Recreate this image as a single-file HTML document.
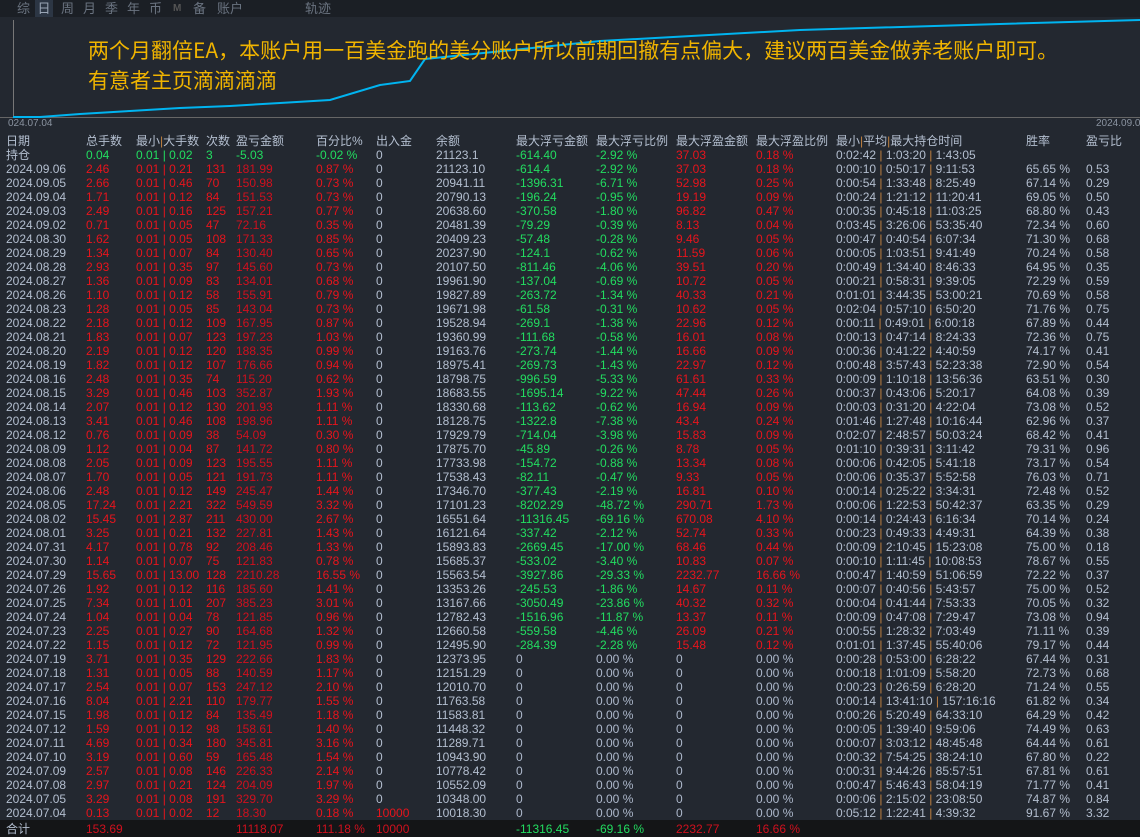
<!DOCTYPE html>
<html><head><meta charset="utf-8">
<style>
*{margin:0;padding:0;box-sizing:border-box}
body{width:1140px;height:837px;background:#232830;overflow:hidden;position:relative;font-family:"Liberation Sans","Noto Sans CJK SC",sans-serif;font-size:12px;color:#b4bfd0}
#tabs{position:absolute;left:0;top:0;width:1140px;height:17px;background:#1b1f25;font-size:13px;color:#6a7380}
#tabs span{position:absolute;top:0;line-height:17px}
.t{position:absolute;left:88px;color:#f0b400;font-size:21px;line-height:26px;font-family:"Noto Sans CJK SC",sans-serif;white-space:nowrap}
.r{position:absolute;left:0;width:1140px;height:14px;line-height:14px;white-space:nowrap}
.r span{position:absolute;top:0}
.a{left:6px}.b{left:86px}.c{left:136px}.d{left:206px}.e{left:236px}.f{left:316px}.g{left:376px}.h{left:436px}.i{left:516px}.j{left:596px}.k{left:676px}.l{left:756px}.m{left:836px}.n{left:1026px}.o{left:1086px}
.R .b,.R .c,.R .d,.R .f,.R .k,.R .l{color:#e8141c}
.R .e{color:#d0101e}
.R .i,.R .j{color:#22dd60}
.R .o,.R .n,.R .g,.R .h,.R .m{color:#b4bfd0}
.z .i,.z .j,.z .k,.z .l{color:#aeb9cc}
.G .b,.G .c,.G .d,.G .e,.G .f{color:#22dd60}
q{color:#c08040;quotes:none}
#foot{position:absolute;left:0;top:820px;width:1140px;height:17px;background:#141517}
#foot span{position:absolute;top:1px;line-height:16px}
</style></head><body>
<div id="tabs">
<span style="left:17px">综</span><span style="left:35px;width:18px;text-align:center;background:#2c3644;color:#9aa6b6">日</span><span style="left:61px">周</span><span style="left:83px">月</span><span style="left:105px">季</span><span style="left:127px">年</span><span style="left:149px">币</span><span style="left:173px;font-size:10px;font-weight:bold;color:#555">M</span><span style="left:193px">备</span><span style="left:217px">账户</span><span style="left:305px">轨迹</span>
</div>
<svg style="position:absolute;left:0;top:17px" width="1140" height="105">
<line x1="13.5" y1="3" x2="13.5" y2="100" stroke="#777" stroke-width="1"/>
<line x1="0" y1="100.5" x2="1140" y2="100.5" stroke="#666" stroke-width="1"/>
<polyline fill="none" stroke="#00b4f0" stroke-width="2" points="13,100 40,100 80,97 130,94 180,91 230,89 280,86 330,83 380,68 410,64 425,42 600,24 800,13 1000,7 1140,3"/>
</svg>
<div style="position:absolute;left:8px;top:118px;font-size:10px;color:#8a93a0">024.07.04</div>
<div style="position:absolute;left:1096px;top:118px;font-size:10px;color:#8a93a0">2024.09.06</div>
<div class="t" style="top:37px">两个月翻倍EA，本账户用一百美金跑的美分账户所以前期回撤有点偏大，建议两百美金做养老账户即可。</div>
<div class="t" style="top:67px">有意者主页滴滴滴滴</div>

<div class="r" style="top:134px"><span class="a">日期</span><span class="b">总手数</span><span class="c">最小<q>|</q>大手数</span><span class="d">次数</span><span class="e">盈亏金额</span><span class="f">百分比%</span><span class="g">出入金</span><span class="h">余额</span><span class="i">最大浮亏金额</span><span class="j">最大浮亏比例</span><span class="k">最大浮盈金额</span><span class="l">最大浮盈比例</span><span class="m">最小<q>|</q>平均<q>|</q>最大持仓时间</span><span class="n">胜率</span><span class="o">盈亏比</span></div>
<div class="r R G" style="top:148px"><span class="a">持仓</span><span class="b">0.04</span><span class="c">0.01 | 0.02</span><span class="d">3</span><span class="e">-5.03</span><span class="f">-0.02 %</span><span class="g">0</span><span class="h">21123.1</span><span class="i">-614.40</span><span class="j">-2.92 %</span><span class="k">37.03</span><span class="l">0.18 %</span><span class="m">0:02:42 <q>|</q> 1:03:20 <q>|</q> 1:43:05</span></div>
<div class="r R" style="top:162px"><span class="a">2024.09.06</span><span class="b">2.46</span><span class="c">0.01 | 0.21</span><span class="d">131</span><span class="e">181.99</span><span class="f">0.87 %</span><span class="g">0</span><span class="h">21123.10</span><span class="i">-614.4</span><span class="j">-2.92 %</span><span class="k">37.03</span><span class="l">0.18 %</span><span class="m">0:00:10 <q>|</q> 0:50:17 <q>|</q> 9:11:53</span><span class="n">65.65 %</span><span class="o">0.53</span></div>
<div class="r R" style="top:176px"><span class="a">2024.09.05</span><span class="b">2.66</span><span class="c">0.01 | 0.46</span><span class="d">70</span><span class="e">150.98</span><span class="f">0.73 %</span><span class="g">0</span><span class="h">20941.11</span><span class="i">-1396.31</span><span class="j">-6.71 %</span><span class="k">52.98</span><span class="l">0.25 %</span><span class="m">0:00:54 <q>|</q> 1:33:48 <q>|</q> 8:25:49</span><span class="n">67.14 %</span><span class="o">0.29</span></div>
<div class="r R" style="top:190px"><span class="a">2024.09.04</span><span class="b">1.71</span><span class="c">0.01 | 0.12</span><span class="d">84</span><span class="e">151.53</span><span class="f">0.73 %</span><span class="g">0</span><span class="h">20790.13</span><span class="i">-196.24</span><span class="j">-0.95 %</span><span class="k">19.19</span><span class="l">0.09 %</span><span class="m">0:00:24 <q>|</q> 1:21:12 <q>|</q> 11:20:41</span><span class="n">69.05 %</span><span class="o">0.50</span></div>
<div class="r R" style="top:204px"><span class="a">2024.09.03</span><span class="b">2.49</span><span class="c">0.01 | 0.16</span><span class="d">125</span><span class="e">157.21</span><span class="f">0.77 %</span><span class="g">0</span><span class="h">20638.60</span><span class="i">-370.58</span><span class="j">-1.80 %</span><span class="k">96.82</span><span class="l">0.47 %</span><span class="m">0:00:35 <q>|</q> 0:45:18 <q>|</q> 11:03:25</span><span class="n">68.80 %</span><span class="o">0.43</span></div>
<div class="r R" style="top:218px"><span class="a">2024.09.02</span><span class="b">0.71</span><span class="c">0.01 | 0.05</span><span class="d">47</span><span class="e">72.16</span><span class="f">0.35 %</span><span class="g">0</span><span class="h">20481.39</span><span class="i">-79.29</span><span class="j">-0.39 %</span><span class="k">8.13</span><span class="l">0.04 %</span><span class="m">0:03:45 <q>|</q> 3:26:06 <q>|</q> 53:35:40</span><span class="n">72.34 %</span><span class="o">0.60</span></div>
<div class="r R" style="top:232px"><span class="a">2024.08.30</span><span class="b">1.62</span><span class="c">0.01 | 0.05</span><span class="d">108</span><span class="e">171.33</span><span class="f">0.85 %</span><span class="g">0</span><span class="h">20409.23</span><span class="i">-57.48</span><span class="j">-0.28 %</span><span class="k">9.46</span><span class="l">0.05 %</span><span class="m">0:00:47 <q>|</q> 0:40:54 <q>|</q> 6:07:34</span><span class="n">71.30 %</span><span class="o">0.68</span></div>
<div class="r R" style="top:246px"><span class="a">2024.08.29</span><span class="b">1.34</span><span class="c">0.01 | 0.07</span><span class="d">84</span><span class="e">130.40</span><span class="f">0.65 %</span><span class="g">0</span><span class="h">20237.90</span><span class="i">-124.1</span><span class="j">-0.62 %</span><span class="k">11.59</span><span class="l">0.06 %</span><span class="m">0:00:05 <q>|</q> 1:03:51 <q>|</q> 9:41:49</span><span class="n">70.24 %</span><span class="o">0.58</span></div>
<div class="r R" style="top:260px"><span class="a">2024.08.28</span><span class="b">2.93</span><span class="c">0.01 | 0.35</span><span class="d">97</span><span class="e">145.60</span><span class="f">0.73 %</span><span class="g">0</span><span class="h">20107.50</span><span class="i">-811.46</span><span class="j">-4.06 %</span><span class="k">39.51</span><span class="l">0.20 %</span><span class="m">0:00:49 <q>|</q> 1:34:40 <q>|</q> 8:46:33</span><span class="n">64.95 %</span><span class="o">0.35</span></div>
<div class="r R" style="top:274px"><span class="a">2024.08.27</span><span class="b">1.36</span><span class="c">0.01 | 0.09</span><span class="d">83</span><span class="e">134.01</span><span class="f">0.68 %</span><span class="g">0</span><span class="h">19961.90</span><span class="i">-137.04</span><span class="j">-0.69 %</span><span class="k">10.72</span><span class="l">0.05 %</span><span class="m">0:00:21 <q>|</q> 0:58:31 <q>|</q> 9:39:05</span><span class="n">72.29 %</span><span class="o">0.59</span></div>
<div class="r R" style="top:288px"><span class="a">2024.08.26</span><span class="b">1.10</span><span class="c">0.01 | 0.12</span><span class="d">58</span><span class="e">155.91</span><span class="f">0.79 %</span><span class="g">0</span><span class="h">19827.89</span><span class="i">-263.72</span><span class="j">-1.34 %</span><span class="k">40.33</span><span class="l">0.21 %</span><span class="m">0:01:01 <q>|</q> 3:44:35 <q>|</q> 53:00:21</span><span class="n">70.69 %</span><span class="o">0.58</span></div>
<div class="r R" style="top:302px"><span class="a">2024.08.23</span><span class="b">1.28</span><span class="c">0.01 | 0.05</span><span class="d">85</span><span class="e">143.04</span><span class="f">0.73 %</span><span class="g">0</span><span class="h">19671.98</span><span class="i">-61.58</span><span class="j">-0.31 %</span><span class="k">10.62</span><span class="l">0.05 %</span><span class="m">0:02:04 <q>|</q> 0:57:10 <q>|</q> 6:50:20</span><span class="n">71.76 %</span><span class="o">0.75</span></div>
<div class="r R" style="top:316px"><span class="a">2024.08.22</span><span class="b">2.18</span><span class="c">0.01 | 0.12</span><span class="d">109</span><span class="e">167.95</span><span class="f">0.87 %</span><span class="g">0</span><span class="h">19528.94</span><span class="i">-269.1</span><span class="j">-1.38 %</span><span class="k">22.96</span><span class="l">0.12 %</span><span class="m">0:00:11 <q>|</q> 0:49:01 <q>|</q> 6:00:18</span><span class="n">67.89 %</span><span class="o">0.44</span></div>
<div class="r R" style="top:330px"><span class="a">2024.08.21</span><span class="b">1.83</span><span class="c">0.01 | 0.07</span><span class="d">123</span><span class="e">197.23</span><span class="f">1.03 %</span><span class="g">0</span><span class="h">19360.99</span><span class="i">-111.68</span><span class="j">-0.58 %</span><span class="k">16.01</span><span class="l">0.08 %</span><span class="m">0:00:13 <q>|</q> 0:47:14 <q>|</q> 8:24:33</span><span class="n">72.36 %</span><span class="o">0.75</span></div>
<div class="r R" style="top:344px"><span class="a">2024.08.20</span><span class="b">2.19</span><span class="c">0.01 | 0.12</span><span class="d">120</span><span class="e">188.35</span><span class="f">0.99 %</span><span class="g">0</span><span class="h">19163.76</span><span class="i">-273.74</span><span class="j">-1.44 %</span><span class="k">16.66</span><span class="l">0.09 %</span><span class="m">0:00:36 <q>|</q> 0:41:22 <q>|</q> 4:40:59</span><span class="n">74.17 %</span><span class="o">0.41</span></div>
<div class="r R" style="top:358px"><span class="a">2024.08.19</span><span class="b">1.82</span><span class="c">0.01 | 0.12</span><span class="d">107</span><span class="e">176.66</span><span class="f">0.94 %</span><span class="g">0</span><span class="h">18975.41</span><span class="i">-269.73</span><span class="j">-1.43 %</span><span class="k">22.97</span><span class="l">0.12 %</span><span class="m">0:00:48 <q>|</q> 3:57:43 <q>|</q> 52:23:38</span><span class="n">72.90 %</span><span class="o">0.54</span></div>
<div class="r R" style="top:372px"><span class="a">2024.08.16</span><span class="b">2.48</span><span class="c">0.01 | 0.35</span><span class="d">74</span><span class="e">115.20</span><span class="f">0.62 %</span><span class="g">0</span><span class="h">18798.75</span><span class="i">-996.59</span><span class="j">-5.33 %</span><span class="k">61.61</span><span class="l">0.33 %</span><span class="m">0:00:09 <q>|</q> 1:10:18 <q>|</q> 13:56:36</span><span class="n">63.51 %</span><span class="o">0.30</span></div>
<div class="r R" style="top:386px"><span class="a">2024.08.15</span><span class="b">3.29</span><span class="c">0.01 | 0.46</span><span class="d">103</span><span class="e">352.87</span><span class="f">1.93 %</span><span class="g">0</span><span class="h">18683.55</span><span class="i">-1695.14</span><span class="j">-9.22 %</span><span class="k">47.44</span><span class="l">0.26 %</span><span class="m">0:00:37 <q>|</q> 0:43:06 <q>|</q> 5:20:17</span><span class="n">64.08 %</span><span class="o">0.39</span></div>
<div class="r R" style="top:400px"><span class="a">2024.08.14</span><span class="b">2.07</span><span class="c">0.01 | 0.12</span><span class="d">130</span><span class="e">201.93</span><span class="f">1.11 %</span><span class="g">0</span><span class="h">18330.68</span><span class="i">-113.62</span><span class="j">-0.62 %</span><span class="k">16.94</span><span class="l">0.09 %</span><span class="m">0:00:03 <q>|</q> 0:31:20 <q>|</q> 4:22:04</span><span class="n">73.08 %</span><span class="o">0.52</span></div>
<div class="r R" style="top:414px"><span class="a">2024.08.13</span><span class="b">3.41</span><span class="c">0.01 | 0.46</span><span class="d">108</span><span class="e">198.96</span><span class="f">1.11 %</span><span class="g">0</span><span class="h">18128.75</span><span class="i">-1322.8</span><span class="j">-7.38 %</span><span class="k">43.4</span><span class="l">0.24 %</span><span class="m">0:01:46 <q>|</q> 1:27:48 <q>|</q> 10:16:44</span><span class="n">62.96 %</span><span class="o">0.37</span></div>
<div class="r R" style="top:428px"><span class="a">2024.08.12</span><span class="b">0.76</span><span class="c">0.01 | 0.09</span><span class="d">38</span><span class="e">54.09</span><span class="f">0.30 %</span><span class="g">0</span><span class="h">17929.79</span><span class="i">-714.04</span><span class="j">-3.98 %</span><span class="k">15.83</span><span class="l">0.09 %</span><span class="m">0:02:07 <q>|</q> 2:48:57 <q>|</q> 50:03:24</span><span class="n">68.42 %</span><span class="o">0.41</span></div>
<div class="r R" style="top:442px"><span class="a">2024.08.09</span><span class="b">1.12</span><span class="c">0.01 | 0.04</span><span class="d">87</span><span class="e">141.72</span><span class="f">0.80 %</span><span class="g">0</span><span class="h">17875.70</span><span class="i">-45.89</span><span class="j">-0.26 %</span><span class="k">8.78</span><span class="l">0.05 %</span><span class="m">0:01:10 <q>|</q> 0:39:31 <q>|</q> 3:11:42</span><span class="n">79.31 %</span><span class="o">0.96</span></div>
<div class="r R" style="top:456px"><span class="a">2024.08.08</span><span class="b">2.05</span><span class="c">0.01 | 0.09</span><span class="d">123</span><span class="e">195.55</span><span class="f">1.11 %</span><span class="g">0</span><span class="h">17733.98</span><span class="i">-154.72</span><span class="j">-0.88 %</span><span class="k">13.34</span><span class="l">0.08 %</span><span class="m">0:00:06 <q>|</q> 0:42:05 <q>|</q> 5:41:18</span><span class="n">73.17 %</span><span class="o">0.54</span></div>
<div class="r R" style="top:470px"><span class="a">2024.08.07</span><span class="b">1.70</span><span class="c">0.01 | 0.05</span><span class="d">121</span><span class="e">191.73</span><span class="f">1.11 %</span><span class="g">0</span><span class="h">17538.43</span><span class="i">-82.11</span><span class="j">-0.47 %</span><span class="k">9.33</span><span class="l">0.05 %</span><span class="m">0:00:06 <q>|</q> 0:35:37 <q>|</q> 5:52:58</span><span class="n">76.03 %</span><span class="o">0.71</span></div>
<div class="r R" style="top:484px"><span class="a">2024.08.06</span><span class="b">2.48</span><span class="c">0.01 | 0.12</span><span class="d">149</span><span class="e">245.47</span><span class="f">1.44 %</span><span class="g">0</span><span class="h">17346.70</span><span class="i">-377.43</span><span class="j">-2.19 %</span><span class="k">16.81</span><span class="l">0.10 %</span><span class="m">0:00:14 <q>|</q> 0:25:22 <q>|</q> 3:34:31</span><span class="n">72.48 %</span><span class="o">0.52</span></div>
<div class="r R" style="top:498px"><span class="a">2024.08.05</span><span class="b">17.24</span><span class="c">0.01 | 2.21</span><span class="d">322</span><span class="e">549.59</span><span class="f">3.32 %</span><span class="g">0</span><span class="h">17101.23</span><span class="i">-8202.29</span><span class="j">-48.72 %</span><span class="k">290.71</span><span class="l">1.73 %</span><span class="m">0:00:06 <q>|</q> 1:22:53 <q>|</q> 50:42:37</span><span class="n">63.35 %</span><span class="o">0.29</span></div>
<div class="r R" style="top:512px"><span class="a">2024.08.02</span><span class="b">15.45</span><span class="c">0.01 | 2.87</span><span class="d">211</span><span class="e">430.00</span><span class="f">2.67 %</span><span class="g">0</span><span class="h">16551.64</span><span class="i">-11316.45</span><span class="j">-69.16 %</span><span class="k">670.08</span><span class="l">4.10 %</span><span class="m">0:00:14 <q>|</q> 0:24:43 <q>|</q> 6:16:34</span><span class="n">70.14 %</span><span class="o">0.24</span></div>
<div class="r R" style="top:526px"><span class="a">2024.08.01</span><span class="b">3.25</span><span class="c">0.01 | 0.21</span><span class="d">132</span><span class="e">227.81</span><span class="f">1.43 %</span><span class="g">0</span><span class="h">16121.64</span><span class="i">-337.42</span><span class="j">-2.12 %</span><span class="k">52.74</span><span class="l">0.33 %</span><span class="m">0:00:23 <q>|</q> 0:49:33 <q>|</q> 4:49:31</span><span class="n">64.39 %</span><span class="o">0.38</span></div>
<div class="r R" style="top:540px"><span class="a">2024.07.31</span><span class="b">4.17</span><span class="c">0.01 | 0.78</span><span class="d">92</span><span class="e">208.46</span><span class="f">1.33 %</span><span class="g">0</span><span class="h">15893.83</span><span class="i">-2669.45</span><span class="j">-17.00 %</span><span class="k">68.46</span><span class="l">0.44 %</span><span class="m">0:00:09 <q>|</q> 2:10:45 <q>|</q> 15:23:08</span><span class="n">75.00 %</span><span class="o">0.18</span></div>
<div class="r R" style="top:554px"><span class="a">2024.07.30</span><span class="b">1.14</span><span class="c">0.01 | 0.07</span><span class="d">75</span><span class="e">121.83</span><span class="f">0.78 %</span><span class="g">0</span><span class="h">15685.37</span><span class="i">-533.02</span><span class="j">-3.40 %</span><span class="k">10.83</span><span class="l">0.07 %</span><span class="m">0:00:10 <q>|</q> 1:11:45 <q>|</q> 10:08:53</span><span class="n">78.67 %</span><span class="o">0.55</span></div>
<div class="r R" style="top:568px"><span class="a">2024.07.29</span><span class="b">15.65</span><span class="c">0.01 | 13.00</span><span class="d">128</span><span class="e">2210.28</span><span class="f">16.55 %</span><span class="g">0</span><span class="h">15563.54</span><span class="i">-3927.86</span><span class="j">-29.33 %</span><span class="k">2232.77</span><span class="l">16.66 %</span><span class="m">0:00:47 <q>|</q> 1:40:59 <q>|</q> 51:06:59</span><span class="n">72.22 %</span><span class="o">0.37</span></div>
<div class="r R" style="top:582px"><span class="a">2024.07.26</span><span class="b">1.92</span><span class="c">0.01 | 0.12</span><span class="d">116</span><span class="e">185.60</span><span class="f">1.41 %</span><span class="g">0</span><span class="h">13353.26</span><span class="i">-245.53</span><span class="j">-1.86 %</span><span class="k">14.67</span><span class="l">0.11 %</span><span class="m">0:00:07 <q>|</q> 0:40:56 <q>|</q> 5:43:57</span><span class="n">75.00 %</span><span class="o">0.52</span></div>
<div class="r R" style="top:596px"><span class="a">2024.07.25</span><span class="b">7.34</span><span class="c">0.01 | 1.01</span><span class="d">207</span><span class="e">385.23</span><span class="f">3.01 %</span><span class="g">0</span><span class="h">13167.66</span><span class="i">-3050.49</span><span class="j">-23.86 %</span><span class="k">40.32</span><span class="l">0.32 %</span><span class="m">0:00:04 <q>|</q> 0:41:44 <q>|</q> 7:53:33</span><span class="n">70.05 %</span><span class="o">0.32</span></div>
<div class="r R" style="top:610px"><span class="a">2024.07.24</span><span class="b">1.04</span><span class="c">0.01 | 0.04</span><span class="d">78</span><span class="e">121.85</span><span class="f">0.96 %</span><span class="g">0</span><span class="h">12782.43</span><span class="i">-1516.96</span><span class="j">-11.87 %</span><span class="k">13.37</span><span class="l">0.11 %</span><span class="m">0:00:09 <q>|</q> 0:47:08 <q>|</q> 7:29:47</span><span class="n">73.08 %</span><span class="o">0.94</span></div>
<div class="r R" style="top:624px"><span class="a">2024.07.23</span><span class="b">2.25</span><span class="c">0.01 | 0.27</span><span class="d">90</span><span class="e">164.68</span><span class="f">1.32 %</span><span class="g">0</span><span class="h">12660.58</span><span class="i">-559.58</span><span class="j">-4.46 %</span><span class="k">26.09</span><span class="l">0.21 %</span><span class="m">0:00:55 <q>|</q> 1:28:32 <q>|</q> 7:03:49</span><span class="n">71.11 %</span><span class="o">0.39</span></div>
<div class="r R" style="top:638px"><span class="a">2024.07.22</span><span class="b">1.15</span><span class="c">0.01 | 0.12</span><span class="d">72</span><span class="e">121.95</span><span class="f">0.99 %</span><span class="g">0</span><span class="h">12495.90</span><span class="i">-284.39</span><span class="j">-2.28 %</span><span class="k">15.48</span><span class="l">0.12 %</span><span class="m">0:01:01 <q>|</q> 1:37:45 <q>|</q> 55:40:06</span><span class="n">79.17 %</span><span class="o">0.44</span></div>
<div class="r R z" style="top:652px"><span class="a">2024.07.19</span><span class="b">3.71</span><span class="c">0.01 | 0.35</span><span class="d">129</span><span class="e">222.66</span><span class="f">1.83 %</span><span class="g">0</span><span class="h">12373.95</span><span class="i">0</span><span class="j">0.00 %</span><span class="k">0</span><span class="l">0.00 %</span><span class="m">0:00:28 <q>|</q> 0:53:00 <q>|</q> 6:28:22</span><span class="n">67.44 %</span><span class="o">0.31</span></div>
<div class="r R z" style="top:666px"><span class="a">2024.07.18</span><span class="b">1.31</span><span class="c">0.01 | 0.05</span><span class="d">88</span><span class="e">140.59</span><span class="f">1.17 %</span><span class="g">0</span><span class="h">12151.29</span><span class="i">0</span><span class="j">0.00 %</span><span class="k">0</span><span class="l">0.00 %</span><span class="m">0:00:18 <q>|</q> 1:01:09 <q>|</q> 5:58:20</span><span class="n">72.73 %</span><span class="o">0.68</span></div>
<div class="r R z" style="top:680px"><span class="a">2024.07.17</span><span class="b">2.54</span><span class="c">0.01 | 0.07</span><span class="d">153</span><span class="e">247.12</span><span class="f">2.10 %</span><span class="g">0</span><span class="h">12010.70</span><span class="i">0</span><span class="j">0.00 %</span><span class="k">0</span><span class="l">0.00 %</span><span class="m">0:00:23 <q>|</q> 0:26:59 <q>|</q> 6:28:20</span><span class="n">71.24 %</span><span class="o">0.55</span></div>
<div class="r R z" style="top:694px"><span class="a">2024.07.16</span><span class="b">8.04</span><span class="c">0.01 | 2.21</span><span class="d">110</span><span class="e">179.77</span><span class="f">1.55 %</span><span class="g">0</span><span class="h">11763.58</span><span class="i">0</span><span class="j">0.00 %</span><span class="k">0</span><span class="l">0.00 %</span><span class="m">0:00:14 <q>|</q> 13:41:10 <q>|</q> 157:16:16</span><span class="n">61.82 %</span><span class="o">0.34</span></div>
<div class="r R z" style="top:708px"><span class="a">2024.07.15</span><span class="b">1.98</span><span class="c">0.01 | 0.12</span><span class="d">84</span><span class="e">135.49</span><span class="f">1.18 %</span><span class="g">0</span><span class="h">11583.81</span><span class="i">0</span><span class="j">0.00 %</span><span class="k">0</span><span class="l">0.00 %</span><span class="m">0:00:26 <q>|</q> 5:20:49 <q>|</q> 64:33:10</span><span class="n">64.29 %</span><span class="o">0.42</span></div>
<div class="r R z" style="top:722px"><span class="a">2024.07.12</span><span class="b">1.59</span><span class="c">0.01 | 0.12</span><span class="d">98</span><span class="e">158.61</span><span class="f">1.40 %</span><span class="g">0</span><span class="h">11448.32</span><span class="i">0</span><span class="j">0.00 %</span><span class="k">0</span><span class="l">0.00 %</span><span class="m">0:00:05 <q>|</q> 1:39:40 <q>|</q> 9:59:06</span><span class="n">74.49 %</span><span class="o">0.63</span></div>
<div class="r R z" style="top:736px"><span class="a">2024.07.11</span><span class="b">4.69</span><span class="c">0.01 | 0.34</span><span class="d">180</span><span class="e">345.81</span><span class="f">3.16 %</span><span class="g">0</span><span class="h">11289.71</span><span class="i">0</span><span class="j">0.00 %</span><span class="k">0</span><span class="l">0.00 %</span><span class="m">0:00:07 <q>|</q> 3:03:12 <q>|</q> 48:45:48</span><span class="n">64.44 %</span><span class="o">0.61</span></div>
<div class="r R z" style="top:750px"><span class="a">2024.07.10</span><span class="b">3.19</span><span class="c">0.01 | 0.60</span><span class="d">59</span><span class="e">165.48</span><span class="f">1.54 %</span><span class="g">0</span><span class="h">10943.90</span><span class="i">0</span><span class="j">0.00 %</span><span class="k">0</span><span class="l">0.00 %</span><span class="m">0:00:32 <q>|</q> 7:54:25 <q>|</q> 38:24:10</span><span class="n">67.80 %</span><span class="o">0.22</span></div>
<div class="r R z" style="top:764px"><span class="a">2024.07.09</span><span class="b">2.57</span><span class="c">0.01 | 0.08</span><span class="d">146</span><span class="e">226.33</span><span class="f">2.14 %</span><span class="g">0</span><span class="h">10778.42</span><span class="i">0</span><span class="j">0.00 %</span><span class="k">0</span><span class="l">0.00 %</span><span class="m">0:00:31 <q>|</q> 9:44:26 <q>|</q> 85:57:51</span><span class="n">67.81 %</span><span class="o">0.61</span></div>
<div class="r R z" style="top:778px"><span class="a">2024.07.08</span><span class="b">2.97</span><span class="c">0.01 | 0.21</span><span class="d">124</span><span class="e">204.09</span><span class="f">1.97 %</span><span class="g">0</span><span class="h">10552.09</span><span class="i">0</span><span class="j">0.00 %</span><span class="k">0</span><span class="l">0.00 %</span><span class="m">0:00:47 <q>|</q> 5:46:43 <q>|</q> 58:04:19</span><span class="n">71.77 %</span><span class="o">0.41</span></div>
<div class="r R z" style="top:792px"><span class="a">2024.07.05</span><span class="b">3.29</span><span class="c">0.01 | 0.08</span><span class="d">191</span><span class="e">329.70</span><span class="f">3.29 %</span><span class="g">0</span><span class="h">10348.00</span><span class="i">0</span><span class="j">0.00 %</span><span class="k">0</span><span class="l">0.00 %</span><span class="m">0:00:06 <q>|</q> 2:15:02 <q>|</q> 23:08:50</span><span class="n">74.87 %</span><span class="o">0.84</span></div>
<div class="r R z" style="top:806px"><span class="a">2024.07.04</span><span class="b">0.13</span><span class="c">0.01 | 0.02</span><span class="d">12</span><span class="e">18.30</span><span class="f">0.18 %</span><span class="g" style="color:#e8141c">10000</span><span class="h">10018.30</span><span class="i">0</span><span class="j">0.00 %</span><span class="k">0</span><span class="l">0.00 %</span><span class="m">0:05:12 <q>|</q> 1:22:41 <q>|</q> 4:39:32</span><span class="n">91.67 %</span><span class="o">3.32</span></div>
<div id="foot"><span style="left:6px;color:#b4bfd0">合计</span><span style="left:86px;color:#d0101e">153.69</span><span style="left:236px;color:#d0101e">11118.07</span><span style="left:316px;color:#d0101e">111.18 %</span><span style="left:376px;color:#d0101e">10000</span><span style="left:516px;color:#22dd60">-11316.45</span><span style="left:596px;color:#22dd60">-69.16 %</span><span style="left:676px;color:#d0101e">2232.77</span><span style="left:756px;color:#d0101e">16.66 %</span></div>
</body></html>
